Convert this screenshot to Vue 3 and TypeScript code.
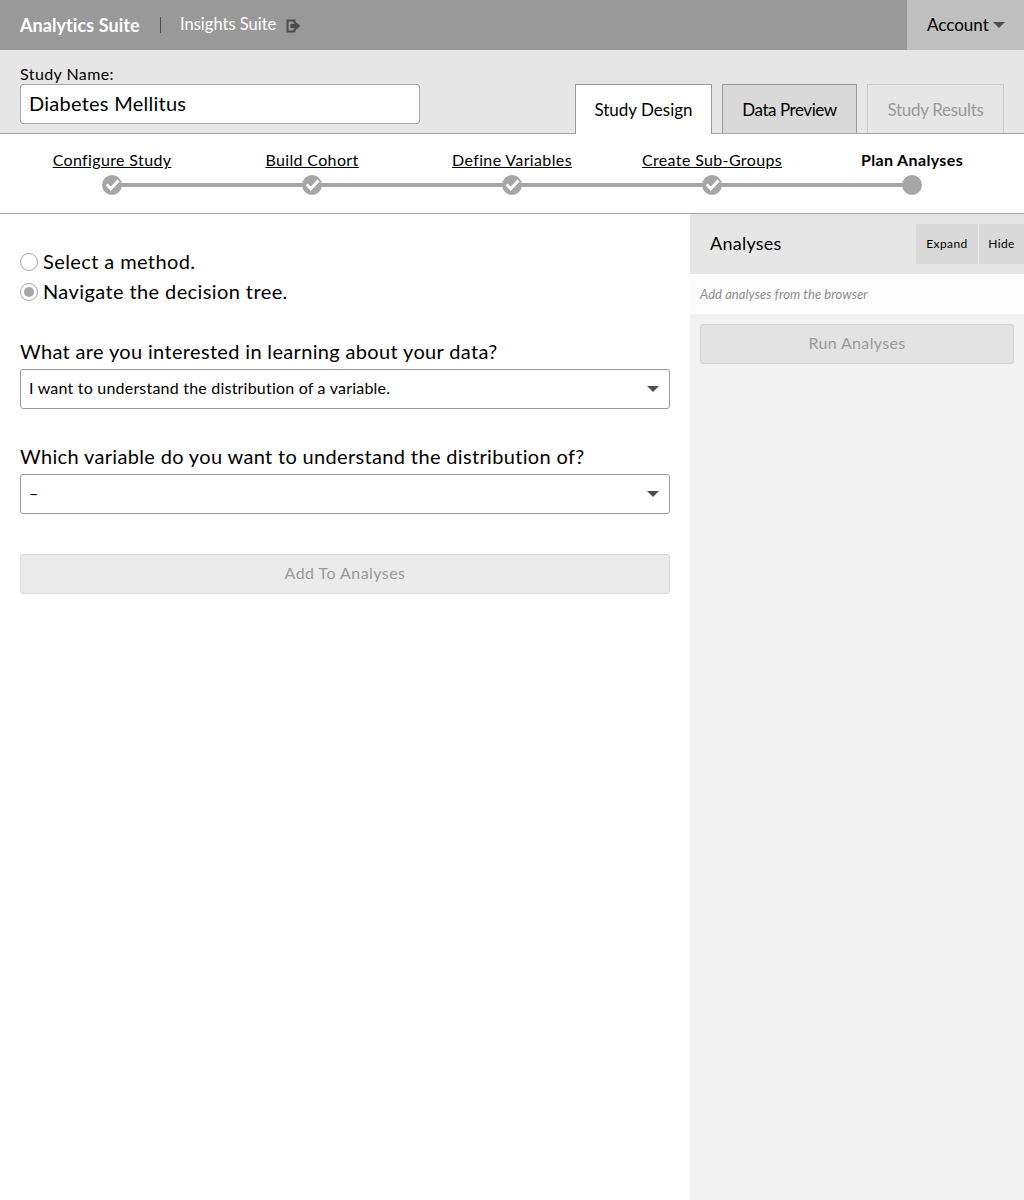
<script setup lang="ts">
import { ref } from 'vue';

type Step = {
  label: string;
  done: boolean;
}

const steps: Step[] = [
  { label: 'Configure Study', done: true },
  { label: 'Build Cohort', done: true },
  { label: 'Define Variables', done: true },
  { label: 'Create Sub-Groups', done: true },
  { label: 'Plan Analyses', done: false },
];

const studyName = ref('Diabetes Mellitus');
const method = ref('tree');
</script>

<template>
  <div class="page">
    <header class="topbar">
      <div class="brand">Analytics Suite</div>
      <div class="divider"></div>
      <div class="suite">Insights Suite</div>
      <svg class="exit" width="15" height="14" viewBox="0 0 15 14">
        <path d="M0.5 0.5H9.5V4.5H7.5V2.5H2.5V11.5H7.5V9.5H9.5V13.5H0.5Z" fill="#4d4d4d" />
        <path d="M4.5 5H9V2.5L14.5 7L9 11.5V9H4.5Z" fill="#4d4d4d" />
      </svg>
      <div class="account">
        <span>Account</span>
        <i class="caret small"></i>
      </div>
    </header>

    <section class="study-bar">
      <div class="study-name">
        <label for="study">Study Name:</label>
        <input id="study" v-model="studyName" type="text" />
      </div>
      <nav class="tabs">
        <div class="tab active">Study Design</div>
        <div class="tab preview">Data Preview</div>
        <div class="tab disabled">Study Results</div>
      </nav>
    </section>

    <section class="steps">
      <div v-for="(step, i) in steps" :key="step.label" class="step">
        <span :class="step.done ? 'step-link' : 'step-current'">{{ step.label }}</span>
        <div class="track">
          <div v-if="i < steps.length - 1" class="rail"></div>
          <svg class="dot" width="20" height="20" viewBox="0 0 20 20">
            <circle cx="10" cy="10" r="10" fill="#a6a6a6" />
            <path v-if="step.done" d="M4.5 9.5L8.8 13.8L16.5 5.5" fill="none" stroke="#fff" stroke-width="3" />
          </svg>
        </div>
      </div>
    </section>

    <main class="content">
      <div class="left">
        <div class="radio-row" @click="method = 'select'">
          <span class="radio" :class="{ on: method === 'select' }"></span>
          <span class="radio-text">Select a method.</span>
        </div>
        <div class="radio-row" @click="method = 'tree'">
          <span class="radio" :class="{ on: method === 'tree' }"></span>
          <span class="radio-text">Navigate the decision tree.</span>
        </div>

        <div class="question first">What are you interested in learning about your data?</div>
        <div class="select">
          <span class="select-text">I want to understand the distribution of a variable.</span>
          <i class="caret"></i>
        </div>

        <div class="question second">Which variable do you want to understand the distribution of?</div>
        <div class="select">
          <span class="select-text">–</span>
          <i class="caret"></i>
        </div>

        <button class="add-btn" disabled>Add To Analyses</button>
      </div>

      <aside class="side">
        <div class="side-head">
          <div class="side-title">Analyses</div>
          <div class="side-btn expand">Expand</div>
          <div class="side-btn hide">Hide</div>
        </div>
        <div class="side-note">Add analyses from the browser</div>
        <button class="run-btn" disabled>Run Analyses</button>
      </aside>
    </main>
  </div>
</template>

<style scoped>
.page {
  width: 1024px;
  height: 1200px;
  display: flex;
  flex-direction: column;
  font-family: Lato, "Open Sans", sans-serif;
  color: #000;
  background: #fff;
  overflow: hidden;
}

.topbar {
  height: 50px;
  flex: none;
  display: flex;
  align-items: center;
  padding-left: 20px;
  background: #999;
  color: #fff;
}

.brand {
  font-size: 18px;
  font-weight: 700;
  letter-spacing: 0.07px;
  width: 120px;
  white-space: nowrap;
}

.divider {
  width: 1px;
  height: 16px;
  margin: 0 19px 0 20px;
  background: #4d4d4d;
}

.suite {
  font-size: 16.5px;
  white-space: nowrap;
  padding-bottom: 2px;
}

.exit {
  margin-left: 10px;
  margin-top: 2px;
}

.account {
  margin-left: auto;
  width: 117px;
  height: 50px;
  display: flex;
  align-items: center;
  padding: 0 0 2px 20px;
  gap: 4px;
  box-sizing: border-box;
  background: #bfbfbf;
  color: #000;
  font-size: 17px;
}

.account .caret {
  margin-top: 2px;
}

.study-bar {
  height: 84px;
  flex: none;
  display: flex;
  justify-content: space-between;
  box-sizing: border-box;
  padding: 0 20px;
  background: #e6e6e6;
  border-bottom: 1px solid #a6a6a6;
}

.study-name {
  width: 400px;
  display: flex;
  flex-direction: column;
  padding-top: 15px;
}

.study-name label {
  font-size: 16px;
  line-height: 17px;
  padding-bottom: 2px;
  letter-spacing: 0.42px;
}

.study-name input {
  height: 40px;
  box-sizing: border-box;
  padding: 0 8px 2px;
  border: 1px solid #a6a6a6;
  border-radius: 3px;
  background: #fff;
  font: 20px Lato, "Open Sans", sans-serif;
  letter-spacing: 0.25px;
  color: #000;
  outline: none;
}

.tabs {
  display: flex;
  align-items: flex-start;
  gap: 10px;
  padding-top: 34px;
}

.tab {
  width: 137px;
  height: 49px;
  box-sizing: border-box;
  display: flex;
  align-items: center;
  justify-content: center;
  border: 1px solid #999;
  border-bottom: 0;
  background: #d9d9d9;
  font-size: 17px;
}

.tab.preview {
  width: 135px;
  letter-spacing: -0.45px;
}

.tab.active {
  height: 50px;
  background: #fff;
  position: relative;
}

.tab.disabled {
  border-color: #ccc;
  background: #e6e6e6;
  color: #999;
  letter-spacing: -0.3px;
}

.steps {
  height: 80px;
  flex: none;
  display: flex;
  box-sizing: border-box;
  padding: 15px 12px 0;
  border-bottom: 1px solid #a6a6a6;
}

.step {
  width: 200px;
  display: flex;
  flex-direction: column;
  align-items: center;
  font-size: 16px;
  line-height: 22px;
  letter-spacing: 0.36px;
}

.step-link {
  text-decoration: underline;
}

.step-current {
  font-weight: 700;
}

.track {
  position: relative;
  width: 20px;
  height: 20px;
  margin-top: 4px;
}

.dot {
  position: relative;
  display: block;
}

.rail {
  position: absolute;
  left: 10px;
  top: 8px;
  width: 200px;
  height: 4px;
  background: #a6a6a6;
}

.content {
  flex: 1;
  display: flex;
  min-height: 0;
}

.left {
  width: 690px;
  box-sizing: border-box;
  padding: 33px 20px 0;
}

.radio-row {
  height: 30px;
  display: flex;
  align-items: center;
  gap: 5px;
  font-size: 20px;
  letter-spacing: 0.4px;
}

.radio-text {
  margin-bottom: 2px;
}

.radio {
  width: 18px;
  height: 18px;
  box-sizing: border-box;
  border: 1px solid #a6a6a6;
  border-radius: 50%;
  background: #fff;
  display: flex;
  align-items: center;
  justify-content: center;
}

.radio.on::after {
  content: "";
  width: 10px;
  height: 10px;
  border-radius: 50%;
  background: #a6a6a6;
}

.question {
  font-size: 20px;
  line-height: 24px;
  margin-bottom: 5px;
  letter-spacing: 0.34px;
}

.question.first {
  margin-top: 32px;
  padding-bottom: 1px;
}

.question.second {
  margin-top: 35px;
  padding-bottom: 1px;
}

.select {
  height: 40px;
  box-sizing: border-box;
  display: flex;
  align-items: center;
  justify-content: space-between;
  padding: 0 10px 0 8px;
  border: 1px solid #999;
  border-radius: 3px;
  font-size: 16px;
  letter-spacing: 0.21px;
}

.select-text {
  margin-bottom: 4px;
}

.caret {
  width: 0;
  height: 0;
  border-left: 6px solid transparent;
  border-right: 6px solid transparent;
  border-top: 6px solid #4d4d4d;
}

.caret.small {
  border-top-color: #4d4d4d;
}

.add-btn,
.run-btn {
  display: block;
  height: 40px;
  box-sizing: border-box;
  padding: 0 0 4px;
  border: 1px solid #d9d9d9;
  border-radius: 3px;
  font: 16px Lato, "Open Sans", sans-serif;
  color: #999;
}

.add-btn {
  width: 650px;
  margin-top: 40px;
  background: #ebebeb;
  letter-spacing: 0.45px;
}

.side {
  width: 334px;
  background: #f2f2f2;
}

.side-head {
  height: 60px;
  display: flex;
  align-items: flex-start;
  background: #e6e6e6;
}

.side-title {
  margin-right: auto;
  padding: 0 0 0 20px;
  font-size: 18px;
  line-height: 58px;
  letter-spacing: 0.25px;
}

.side-btn {
  height: 40px;
  margin-top: 10px;
  padding-bottom: 2px;
  box-sizing: border-box;
  display: flex;
  align-items: center;
  justify-content: center;
  background: #d9d9d9;
  font-size: 12px;
  letter-spacing: 0.4px;
}

.expand {
  width: 62px;
  margin-right: 1px;
}

.hide {
  width: 45px;
}

.side-note {
  height: 40px;
  box-sizing: border-box;
  padding-left: 10px;
  background: #fdfdfd;
  color: #8c8c8c;
  font-size: 13px;
  font-style: italic;
  letter-spacing: 0.07px;
  line-height: 40px;
}

.run-btn {
  width: 314px;
  margin: 10px 0 0 10px;
  background: #e3e3e3;
  border-color: #d4d4d4;
  letter-spacing: 0.35px;
}
</style>
